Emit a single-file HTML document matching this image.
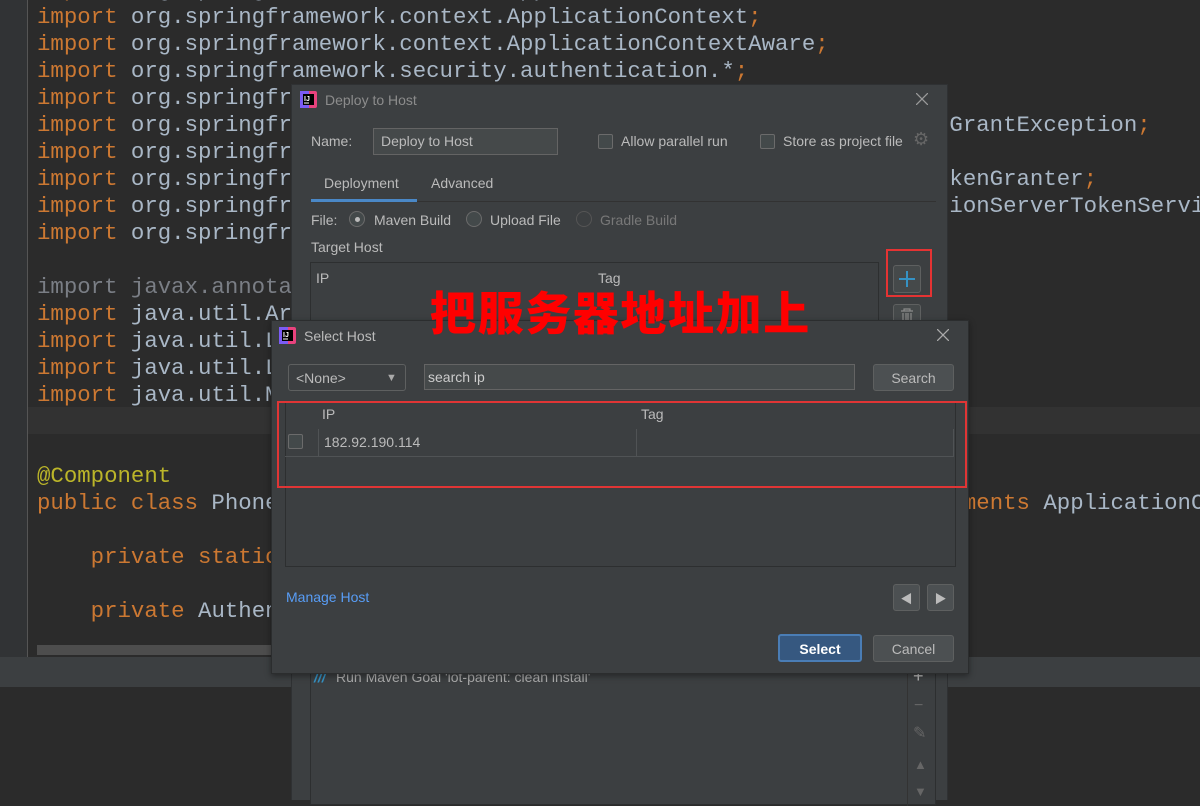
<!DOCTYPE html>
<html><head><meta charset="utf-8"><style>
*{margin:0;padding:0;box-sizing:border-box}
body{width:1200px;height:800px;overflow:hidden;background:#2b2b2b;position:relative;font-family:"Liberation Sans","Noto Sans CJK SC",sans-serif;}
.a{position:absolute}
.code{position:absolute;left:37px;width:1163px;height:680px;overflow:hidden;font-family:"Liberation Mono",monospace;font-size:22.37px;line-height:27px;color:#a9b7c6;white-space:pre}
.k{color:#cc7832}.g{color:#7a7e85}.an{color:#bbb529}
.t{position:absolute;font-size:14px;color:#bbbbbb;white-space:nowrap;line-height:16px}
.cb{position:absolute;width:15px;height:15px;border:1px solid #6b6b6b;background:#43494a;border-radius:2px}
.rd{position:absolute;width:16px;height:16px;border:1px solid #6b6b6b;border-radius:50%;background:#43494a}
.btn{position:absolute;border:1px solid #5e6060;background:#4c5052;border-radius:3px;color:#bbb;font-size:14px;text-align:center}
.inp{position:absolute;background:#45494a;border:1px solid #646464}
</style></head><body>
<div class="a" style="left:0;top:0;width:27px;height:658px;background:#313335"></div>
<div class="a" style="left:27px;top:0;width:1px;height:658px;background:#555"></div>
<div class="a" style="left:28px;top:407px;width:1172px;height:27px;background:#323232"></div>
<div class="code" style="top:-23px"><span class="k">import</span> org.springframework.context.ApplicationEventPublisher<span class="k">;</span>
<span class="k">import</span> org.springframework.context.ApplicationContext<span class="k">;</span>
<span class="k">import</span> org.springframework.context.ApplicationContextAware<span class="k">;</span>
<span class="k">import</span> org.springframework.security.authentication.*<span class="k">;</span>
<span class="k">import</span> org.springframework.security.core.Authentication<span class="k">;</span>
<span class="k">import</span> org.springframework.security.oauth2.common.exceptions.InvalidGrantException<span class="k">;</span>
<span class="k">import</span> org.springframework.security.oauth2.provider.*<span class="k">;</span>
<span class="k">import</span> org.springframework.security.oauth2.provider.token.AbstractTokenGranter<span class="k">;</span>
<span class="k">import</span> org.springframework.security.oauth2.provider.token.AuthorizationServerTokenServices<span class="k">;</span>
<span class="k">import</span> org.springframework.stereotype.Component<span class="k">;</span>

<span class="g">import javax.annotation.Resource;</span>
<span class="k">import</span> java.util.ArrayList<span class="k">;</span>
<span class="k">import</span> java.util.LinkedHashMap<span class="k">;</span>
<span class="k">import</span> java.util.List<span class="k">;</span>
<span class="k">import</span> java.util.Map<span class="k">;</span>


<span class="an">@Component</span>
<span class="k">public class</span> PhoneAuthenticationProvider <span class="k">extends</span> AbstractHelper <span class="k">implements</span> ApplicationContextAware {

    <span class="k">private static final</span> String GRANT_TYPE

    <span class="k">private</span> AuthenticationManager manager<span class="k">;</span></div>
<div class="a" style="left:37px;top:645px;width:240px;height:10px;background:#4d4d4d"></div>
<div class="a" style="left:0;top:657px;width:1200px;height:30px;background:#3c3f41"></div>

<!-- Deploy dialog -->
<div class="a" style="left:291px;top:84px;width:657px;height:716px;background:#3c3f41;border:1px solid #2f3133;border-bottom:none"></div>
<svg class="a" style="left:300px;top:91px" width="17" height="17"><rect x="0" y="0" width="17" height="17" rx="2" fill="#e8427d"/><rect x="0" y="0" width="9" height="17" fill="#7b5cf5"/><rect x="3" y="3" width="11" height="11" fill="#000"/><text x="4" y="10" font-size="7" fill="#fff" font-family="Liberation Sans" font-weight="bold">IJ</text><rect x="4" y="11.5" width="5" height="1" fill="#fff"/></svg>
<div class="t" style="left:325px;top:92px;color:#8c8c8c">Deploy to Host</div>
<svg class="a" style="left:916px;top:93px" width="12" height="12"><path d="M0 0L12 12M12 0L0 12" stroke="#9a9a9a" stroke-width="1.3"/></svg>
<div class="t" style="left:311px;top:133px">Name:</div>
<div class="inp" style="left:373px;top:128px;width:185px;height:27px"></div>
<div class="t" style="left:381px;top:133px">Deploy to Host</div>
<div class="cb" style="left:598px;top:134px"></div><div class="t" style="left:621px;top:133px">Allow parallel run</div>
<div class="cb" style="left:760px;top:134px"></div><div class="t" style="left:783px;top:133px">Store as project file</div>
<div class="t" style="left:913px;top:131px;font-size:18px;color:#666">⚙</div>
<div class="t" style="left:324px;top:175px">Deployment</div>
<div class="t" style="left:431px;top:175px">Advanced</div>
<div class="a" style="left:311px;top:201px;width:625px;height:1px;background:#323232"></div>
<div class="a" style="left:311px;top:199px;width:106px;height:3px;background:#4a88c7"></div>
<div class="t" style="left:311px;top:212px">File:</div>
<div class="rd" style="left:349px;top:211px"></div><div class="a" style="left:355px;top:217px;width:5px;height:5px;border-radius:50%;background:#bbb"></div>
<div class="t" style="left:374px;top:212px">Maven Build</div>
<div class="rd" style="left:466px;top:211px"></div><div class="t" style="left:490px;top:212px">Upload File</div>
<div class="rd" style="left:576px;top:211px;border-color:#555;background:#3c3f41"></div><div class="t" style="left:600px;top:212px;color:#787878">Gradle Build</div>
<div class="t" style="left:311px;top:239px">Target Host</div>
<div class="a" style="left:310px;top:262px;width:569px;height:80px;border:1px solid #2d2f30;background:#3c3f41"></div>
<div class="t" style="left:316px;top:270px">IP</div><div class="t" style="left:598px;top:270px">Tag</div>
<div class="a" style="left:886px;top:249px;width:46px;height:48px;border:2px solid #e53333"></div>
<div class="btn" style="left:893px;top:265px;width:28px;height:28px;background:#45494a"></div>
<svg class="a" style="left:897px;top:269px" width="20" height="20"><path d="M10 2V18M2 10H18" stroke="#3592c4" stroke-width="2"/></svg>
<div class="btn" style="left:893px;top:304px;width:28px;height:20px;background:#45494a"></div>
<svg class="a" style="left:900px;top:308px" width="14" height="12"><path d="M1 3H13M4 3V1H10V3M3 5V12M6 5V12M8 5V12M11 5V12" stroke="#8a8a8a" stroke-width="1.2" fill="none"/></svg>
<!-- bottom part -->
<div class="a" style="left:310px;top:665px;width:626px;height:140px;border:1px solid #2d2f30;background:#3c3f41"></div>
<div class="a" style="left:907px;top:666px;width:1px;height:140px;background:#333"></div>
<div class="t" style="left:314px;top:669px;color:#3592c4;font-weight:bold;font-style:italic">///</div>
<div class="t" style="left:336px;top:669px;color:#aaa">Run Maven Goal 'iot-parent: clean install'</div>
<div class="t" style="left:913px;top:668px;font-size:18px;color:#bbb">+</div>
<div class="t" style="left:914px;top:698px;font-size:16px;color:#666">−</div>
<div class="t" style="left:913px;top:726px;font-size:16px;color:#666">✎</div>
<div class="t" style="left:914px;top:757px;font-size:13px;color:#666">▲</div>
<div class="t" style="left:914px;top:784px;font-size:13px;color:#666">▼</div>

<!-- Select host dialog -->
<div class="a" style="left:271px;top:320px;width:698px;height:354px;background:#3c3f41;border:1px solid #2b2d2e;box-shadow:0 2px 6px rgba(0,0,0,.4)"></div>
<svg class="a" style="left:279px;top:327px" width="17" height="17"><rect x="0" y="0" width="17" height="17" rx="2" fill="#e8427d"/><rect x="0" y="0" width="9" height="17" fill="#7b5cf5"/><rect x="3" y="3" width="11" height="11" fill="#000"/><text x="4" y="10" font-size="7" fill="#fff" font-family="Liberation Sans" font-weight="bold">IJ</text><rect x="4" y="11.5" width="5" height="1" fill="#fff"/></svg>
<div class="t" style="left:304px;top:328px">Select Host</div>
<svg class="a" style="left:937px;top:329px" width="12" height="12"><path d="M0 0L12 12M12 0L0 12" stroke="#aaa" stroke-width="1.3"/></svg>
<div class="btn" style="left:288px;top:364px;width:118px;height:27px;background:#3c3f41;text-align:left;padding:5px 0 0 7px">&lt;None&gt;</div>
<div class="t" style="left:386px;top:370px;font-size:11px;color:#aaa">▼</div>
<div class="inp" style="left:424px;top:364px;width:431px;height:26px"></div>
<div class="t" style="left:428px;top:369px;color:#ccc">search ip</div>
<div class="btn" style="left:873px;top:364px;width:81px;height:27px;padding-top:5px">Search</div>
<div class="a" style="left:285px;top:402px;width:671px;height:165px;border:1px solid #2d2f30;border-top:none;background:#3c3f41"></div>
<div class="t" style="left:322px;top:406px">IP</div><div class="t" style="left:641px;top:406px">Tag</div>
<div class="a" style="left:318px;top:429px;width:1px;height:27px;background:#505355"></div>
<div class="a" style="left:636px;top:429px;width:1px;height:27px;background:#505355"></div>
<div class="a" style="left:285px;top:456px;width:669px;height:1px;background:#505355"></div>
<div class="a" style="left:953px;top:429px;width:1px;height:27px;background:#505355"></div>
<div class="cb" style="left:288px;top:434px"></div>
<div class="t" style="left:324px;top:434px">182.92.190.114</div>
<div class="a" style="left:277px;top:401px;width:690px;height:87px;border:2px solid #e03535"></div>
<div class="t" style="left:286px;top:589px;color:#589df6">Manage Host</div>
<div class="btn" style="left:893px;top:584px;width:27px;height:27px;padding-top:5px;font-size:12px">◀</div>
<div class="btn" style="left:927px;top:584px;width:27px;height:27px;padding-top:5px;font-size:12px">▶</div>
<div class="btn" style="left:778px;top:634px;width:84px;height:28px;background:#365880;border:2px solid #4a7db5;color:#fff;font-weight:bold;padding-top:5px">Select</div>
<div class="btn" style="left:873px;top:635px;width:81px;height:27px;padding-top:5px">Cancel</div>

<div class="a" style="left:430px;top:284px;font-family:'Noto Sans CJK SC',sans-serif;font-weight:900;font-size:46px;line-height:54px;color:#ff0000;letter-spacing:1.6px;white-space:nowrap">把服务器地址加上</div>
</body></html>
